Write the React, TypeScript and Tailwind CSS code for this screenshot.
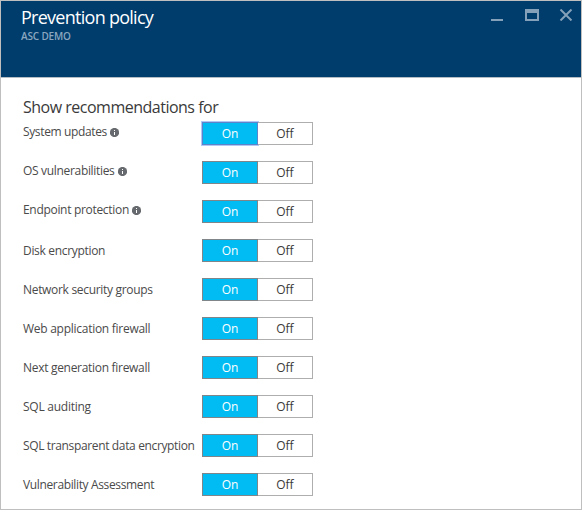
const policies = [
  { label: 'System updates', info: true, focused: true, spacing: 'tracking-[-0.36px]' },
  { label: 'OS vulnerabilities', info: true, focused: false, spacing: 'tracking-[-0.32px]' },
  { label: 'Endpoint protection', info: true, focused: false, spacing: 'tracking-[-0.31px]' },
  { label: 'Disk encryption', info: false, focused: false, spacing: 'tracking-[-0.32px]' },
  { label: 'Network security groups', info: false, focused: false, spacing: 'tracking-[-0.31px]' },
  { label: 'Web application firewall', info: false, focused: false, spacing: 'tracking-[-0.27px]' },
  { label: 'Next generation firewall', info: false, focused: false, spacing: 'tracking-[-0.3px]' },
  { label: 'SQL auditing', info: false, focused: false, spacing: 'tracking-[-0.25px]' },
  { label: 'SQL transparent data encryption', info: false, focused: false, spacing: 'tracking-[-0.36px]' },
  { label: 'Vulnerability Assessment', info: false, focused: false, spacing: 'tracking-[-0.36px]' },
];

function InfoIcon() {
  return (
    <svg className="ml-[3px] size-[9px] shrink-0" viewBox="0 0 9 9" aria-hidden="true">
      <circle cx="4.5" cy="4.5" r="4.6" fill="#66696d" />
      <path d="M4 2h1v1H4zM4 4h1v3H4z" fill="#fff" />
    </svg>
  );
}

function Toggle({ focused }: { focused: boolean }) {
  return (
    <div className="flex h-[23px] w-[111px] text-[12px] leading-[21px]">
      <button
        className={`w-14 border bg-[#00bcf2] text-center font-medium text-white ${
          focused ? 'border-[#5f83c8] ring-1 ring-[#7da2ef]/60' : 'border-[#7f8588]'
        }`}
      >
        On
      </button>
      <button className="w-[55px] border border-l-0 border-[#aeaeae] bg-white text-center text-[#3a3a3a]">Off</button>
    </div>
  );
}

export default function App() {
  return (
    <div className="flex h-[510px] w-[582px] flex-col overflow-hidden border border-[#bfbfbf] bg-white font-['Open_Sans','Noto_Sans',sans-serif]">
      <header className="flex h-[77px] shrink-0 justify-between border-b border-[#b4bcc4] bg-[#003c6c] pl-5">
        <div className="pt-1">
          <h1 className="text-[18px] leading-6 tracking-[-0.73px] text-white">Prevention policy</h1>
          <p className="mt-px text-[10px] leading-3 font-semibold tracking-[-0.15px] text-[#8ba7bf]">ASC DEMO</p>
        </div>
        <svg className="mt-2 mr-2 h-3 w-[84px]" viewBox="0 0 84 12" aria-hidden="true">
          <path d="M2 10h12v2H2z" fill="#85a1b9" />
          <path fillRule="evenodd" d="M36 0h14v12H36zM38 4v6h10V4z" fill="#85a1b9" />
          <path d="M71.5.5l11 11M82.500.5l-11 11" stroke="#85a1b9" strokeWidth="2" />
        </svg>
      </header>
      <main className="px-[22px] pt-[17px]">
        <h2 className="h-[27px] text-[16px] leading-6 tracking-[-0.5px] whitespace-nowrap text-[#3a3a3a]">
          Show recommendations for
        </h2>
        <ul>
          {policies.map(({ label, info, focused, spacing }) => (
            <li key={label} className="flex h-[39px] items-start">
              <div className={`flex w-[179px] shrink-0 items-center ${info ? 'pt-px' : 'pt-[3px]'}`}>
                <span className={`text-[12px] leading-[18px] whitespace-nowrap text-[#4a4a4a] ${spacing}`}>{label}</span>
                {info && <InfoIcon />}
              </div>
              <Toggle focused={focused} />
            </li>
          ))}
        </ul>
      </main>
    </div>
  );
}
